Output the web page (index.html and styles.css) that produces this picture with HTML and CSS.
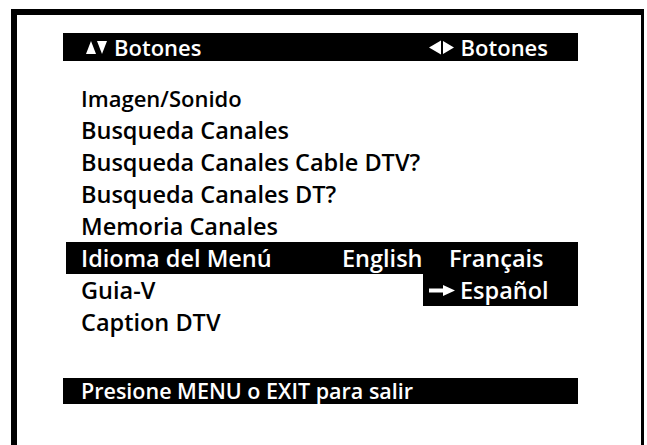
FILE: index.html
```html
<!DOCTYPE html>
<html lang="es">
<head>
    <meta charset="UTF-8">
    <title>Idioma del Menú</title>
    <link rel="stylesheet" href="styles.css">
</head>
<body>
    <div class="frame">
        <div class="panel">
            <div class="hint-bar">
                <span class="hint">
                    <svg class="arrows" width="21" height="14" viewBox="0 0 21 14">
                        <polygon points="0,14 5,1 10,14" fill="#fff"/>
                        <polygon points="11,1 21,1 16,14" fill="#fff"/>
                    </svg>
                    Botones
                </span>
                <span class="hint">
                    <svg class="arrows" width="25" height="15" viewBox="0 0 25 15">
                        <polygon points="0,7.5 12,0.5 12,14.5" fill="#fff"/>
                        <polygon points="14,1 25,7.5 14,14" fill="#fff"/>
                    </svg>
                    Botones
                </span>
            </div>

            <ul class="menu">
                <li class="first">Imagen/Sonido</li>
                <li>Busqueda Canales</li>
                <li>Busqueda Canales Cable DTV?</li>
                <li>Busqueda Canales DT?</li>
                <li>Memoria Canales</li>
                <li class="menu-item selected">
                    <span class="label">Idioma del Menú</span>
                    <span class="option">English</span>
                    <span class="option">Français</span>
                    <div class="dropdown">
                        <svg class="pointer" width="26" height="11" viewBox="0 0 26 11">
                            <rect x="0" y="3.5" width="16" height="4" fill="#fff"/>
                            <polygon points="14,0 26,5.5 14,11" fill="#fff"/>
                        </svg>
                        <span>Español</span>
                    </div>
                </li>
                <li>Guia-V</li>
                <li>Caption DTV</li>
            </ul>

            <div class="exit-bar">Presione MENU o EXIT para salir</div>
        </div>
    </div>
</body>
</html>
```

FILE: styles.css
```css
html, body {
    margin: 0;
    padding: 0;
    background: #fff;
    overflow: hidden;
}
body {
    font-family: "Open Sans", "Liberation Sans", sans-serif;
    font-weight: 600;
    color: #000;
}
.frame {
    margin: 9px 0 0 11px;
    width: 624px;
    height: 450px;
    border-top: 6px solid #000;
    border-left: 6px solid #000;
    border-right: 3px solid #000;
}
.panel {
    padding: 18px 0 0 46px;
    width: 515px;
}
.hint-bar {
    display: flex;
    justify-content: space-between;
    align-items: center;
    height: 28px;
    padding: 0 30px 0 23px;
    background: #000;
    color: #fff;
    font-size: 22px;
}
.hint {
    display: flex;
    align-items: center;
    gap: 7px;
}
.menu {
    list-style: none;
    margin: 21px 0 0 3px;
    padding: 0;
    font-size: 23.5px;
}
.menu li {
    height: 32px;
    line-height: 32px;
    padding-left: 15px;
}
.menu .first {
    font-size: 22px;
}
.menu-item {
    position: relative;
    display: grid;
    grid-template-columns: 261px 107px 1fr;
}
.selected {
    background: #000;
    color: #fff;
}
.dropdown {
    position: absolute;
    top: 100%;
    right: 0;
    width: 155px;
    height: 32px;
    display: flex;
    align-items: center;
    gap: 5px;
    padding-left: 6px;
    box-sizing: border-box;
    background: #000;
    color: #fff;
}
.exit-bar {
    margin-top: 40px;
    height: 26px;
    line-height: 26px;
    padding-left: 18px;
    background: #000;
    color: #fff;
    font-size: 21.5px;
}
```
